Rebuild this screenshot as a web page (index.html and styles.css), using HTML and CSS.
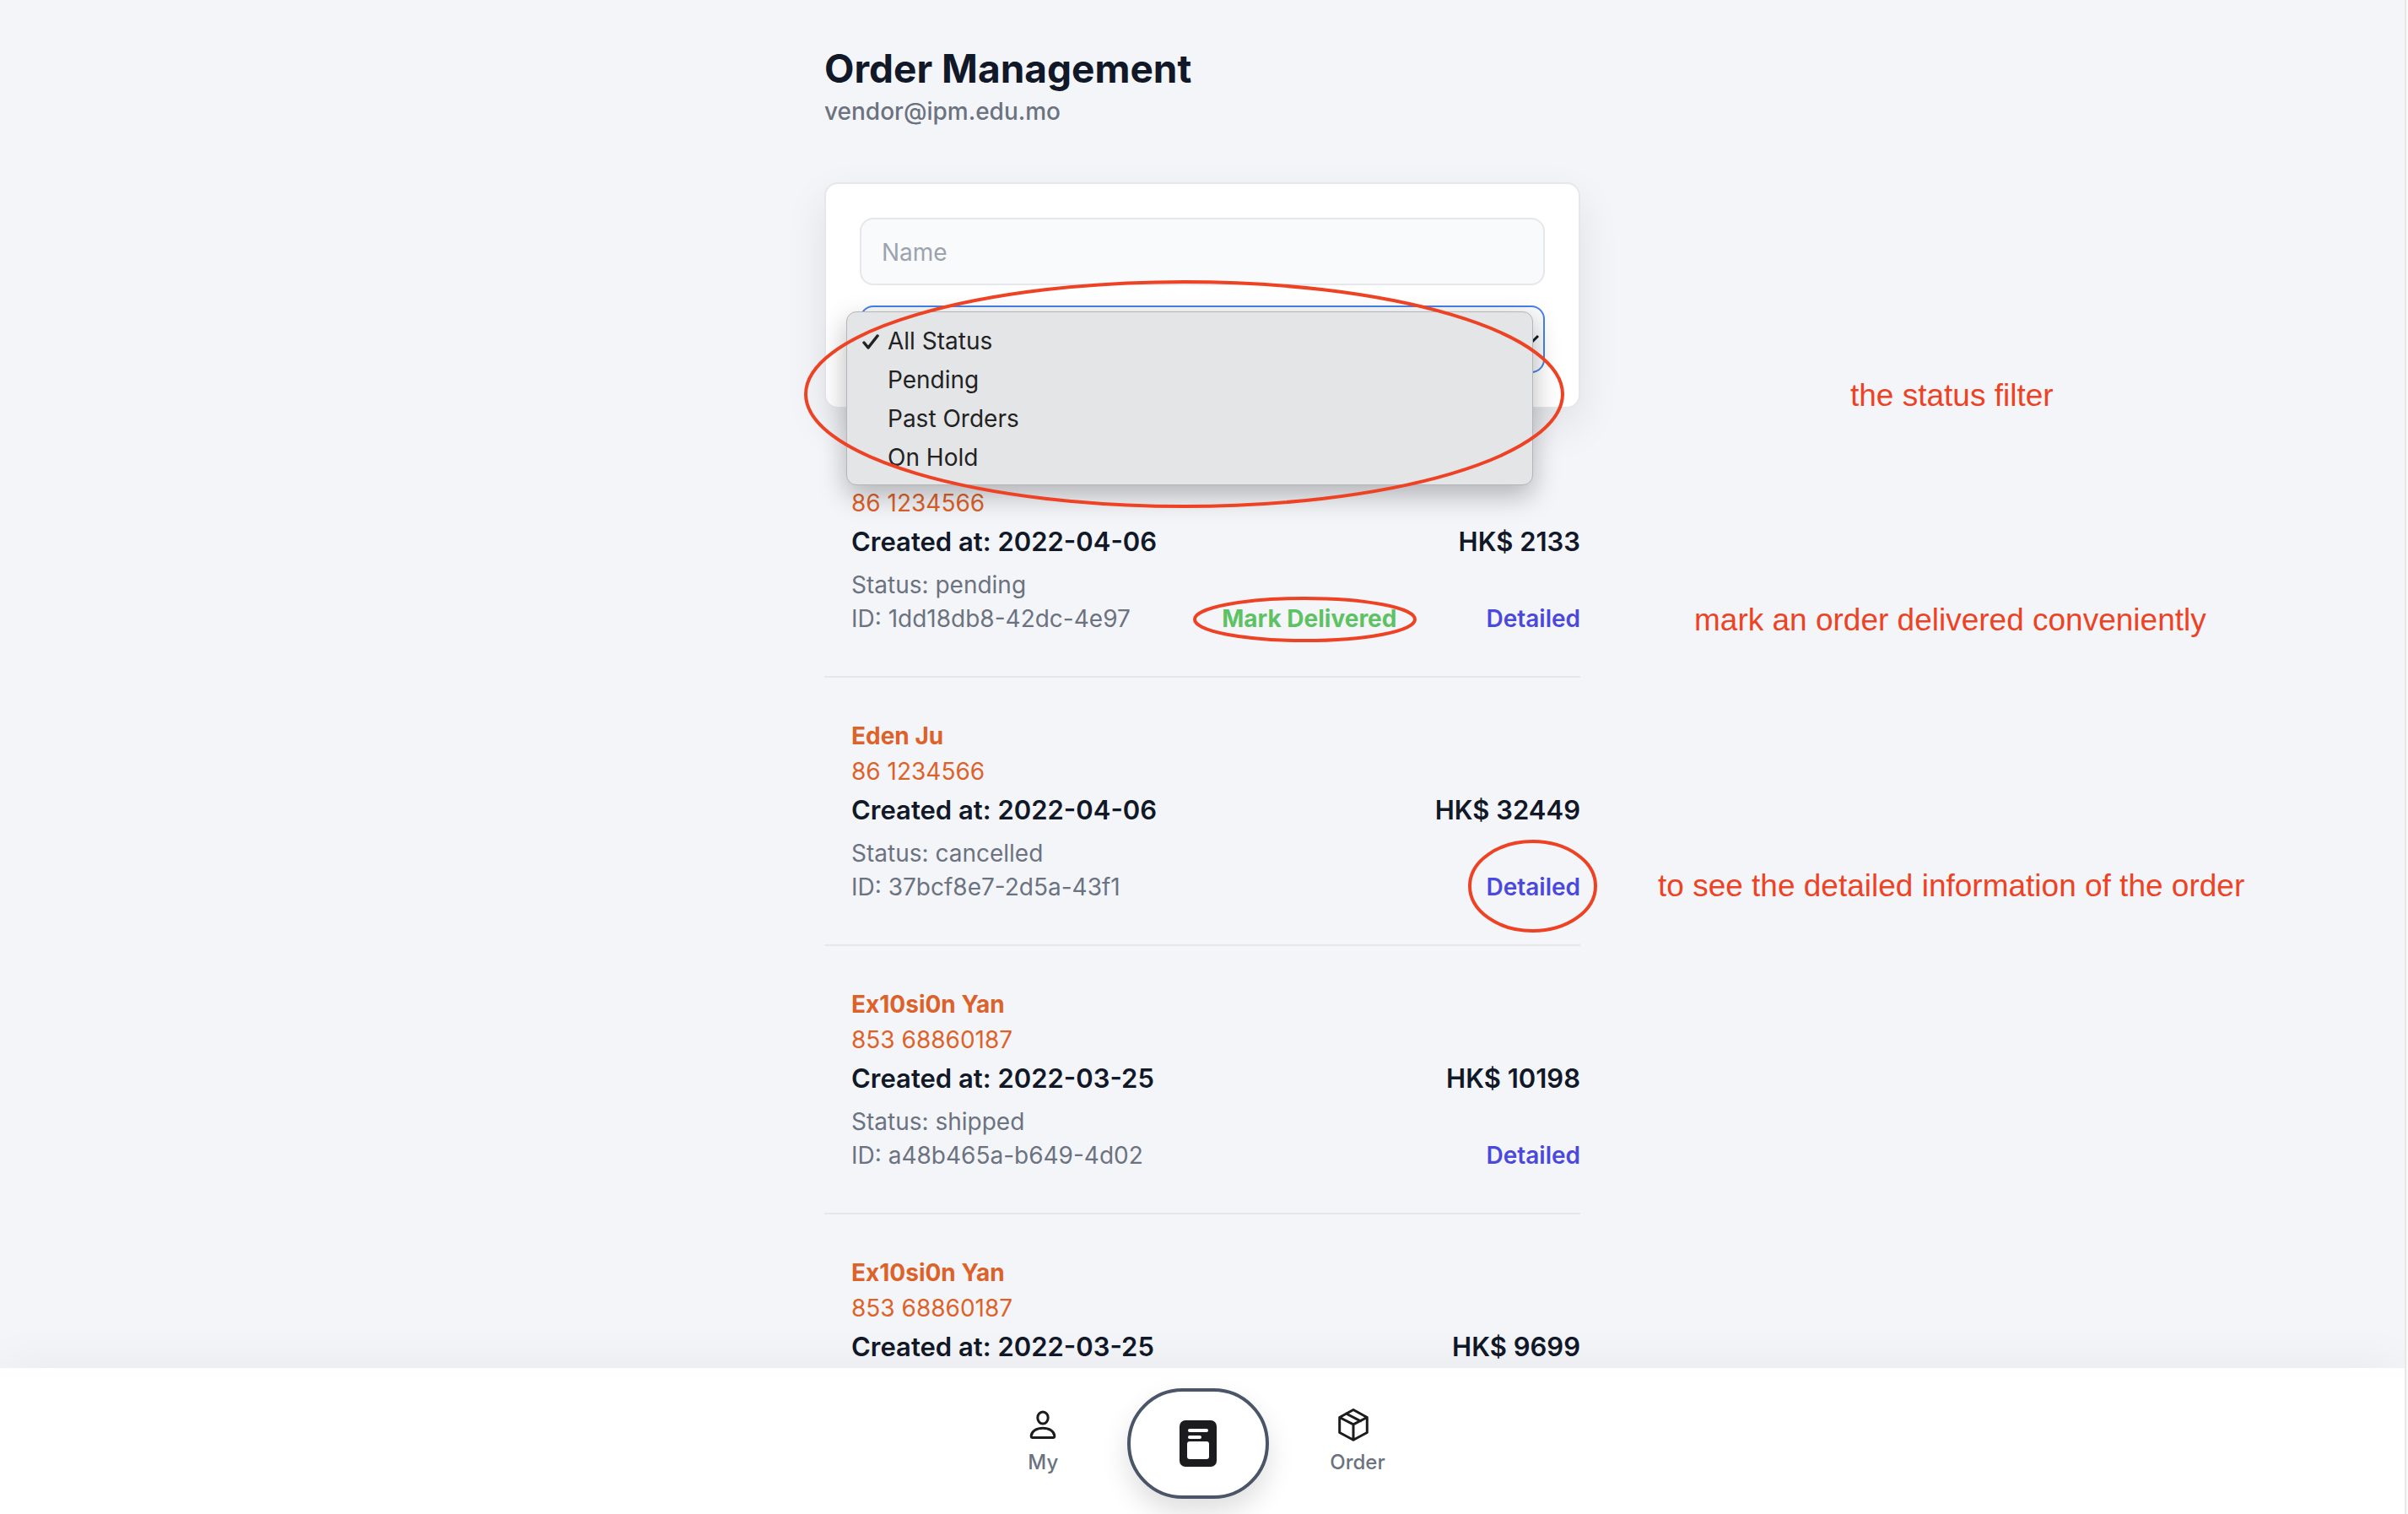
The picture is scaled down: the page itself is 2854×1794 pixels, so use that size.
FILE: index.html
```html
<!DOCTYPE html>
<html lang="en">
<head>
<meta charset="utf-8">
<meta name="viewport" content="width=device-width, initial-scale=1">
<title>Order Management</title>
<link rel="stylesheet" href="styles.css">
</head>
<body>
<div class="page">
  <main class="content">
    <header class="header">
      <h1 class="title">Order Management</h1>
      <p class="email">vendor@ipm.edu.mo</p>
    </header>

    <form class="filters">
      <input class="field" type="text" placeholder="Name" aria-label="Name">
      <div class="select-wrap">
        <select class="field field-open" aria-label="Status">
          <option>All Status</option>
          <option>Pending</option>
          <option>Past Orders</option>
          <option>On Hold</option>
        </select>
        <svg class="chevron" viewBox="0 0 20 20" aria-hidden="true"><path d="M6 8l4 4 4-4"/></svg>
        <ul class="menu">
          <li class="menu-item"><svg class="tick" viewBox="0 0 20 20" aria-hidden="true"><path d="M2 11l5 6L18 3"/></svg>All Status</li>
          <li class="menu-item">Pending</li>
          <li class="menu-item">Past Orders</li>
          <li class="menu-item">On Hold</li>
        </ul>
        <svg class="ring ring-filter" viewBox="0 0 901 270" aria-hidden="true"><ellipse cx="450.5" cy="135" rx="448.5" ry="133"/></svg>
        <p class="note note-filter">the status filter</p>
      </div>
    </form>

    <ul class="orders">
      <li class="order">
        <p class="name">Eden Ju</p>
        <p class="phone">86 1234566</p>
        <div class="line line-main"><span>Created at: 2022-04-06</span><span>HK$ 2133</span></div>
        <p class="meta">Status: pending</p>
        <div class="line meta"><span>ID: 1dd18db8-42dc-4e97</span>
          <div class="actions">
            <div class="marked"><button class="deliver" type="button">Mark Delivered</button>
              <svg class="ring ring-deliver" viewBox="0 0 265 54" aria-hidden="true"><ellipse cx="132.5" cy="27" rx="130.5" ry="25"/></svg></div>
            <a class="detail" href="#">Detailed</a>
          </div>
          <p class="note note-deliver">mark an order delivered conveniently</p>
        </div>
      </li>
      <li class="order">
        <p class="name">Eden Ju</p>
        <p class="phone">86 1234566</p>
        <div class="line line-main"><span>Created at: 2022-04-06</span><span>HK$ 32449</span></div>
        <p class="meta">Status: cancelled</p>
        <div class="line meta"><span>ID: 37bcf8e7-2d5a-43f1</span>
          <div class="marked"><a class="detail" href="#">Detailed</a>
            <svg class="ring ring-detail" viewBox="0 0 153 110" aria-hidden="true"><ellipse cx="76.5" cy="55" rx="74.5" ry="53"/></svg></div>
          <p class="note note-detail">to see the detailed information of the order</p>
        </div>
      </li>
      <li class="order">
        <p class="name">Ex10si0n Yan</p>
        <p class="phone">853 68860187</p>
        <div class="line line-main"><span>Created at: 2022-03-25</span><span>HK$ 10198</span></div>
        <p class="meta">Status: shipped</p>
        <div class="line meta"><span>ID: a48b465a-b649-4d02</span><a class="detail" href="#">Detailed</a></div>
      </li>
      <li class="order">
        <p class="name">Ex10si0n Yan</p>
        <p class="phone">853 68860187</p>
        <div class="line line-main"><span>Created at: 2022-03-25</span><span>HK$ 9699</span></div>
      </li>
    </ul>
  </main>

  <nav class="tabs">
    <a class="tab" href="#">
      <svg class="tab-icon" viewBox="0 0 40 40" aria-hidden="true"><ellipse cx="20" cy="11" rx="6.200" ry="7"/><path d="M6.200 32.500C6.500 27 12.500 23.200 20 23.200S33.500 27 33.800 32.500C33.800 34 33.300 34.500 32 34.500H8C6.700 34.500 6.200 34 6.200 32.500z"/></svg>
      <span>My</span>
    </a>
    <button class="tab-main" type="button" aria-label="Orders">
      <svg class="doc" viewBox="0 0 44 55" aria-hidden="true"><rect class="ink" width="44" height="55" rx="7"/><rect x="10" y="10" width="24" height="4" rx="2"/><rect x="10" y="18" width="16" height="4" rx="2"/><rect x="9" y="25" width="26" height="21" rx="3"/></svg>
    </button>
    <a class="tab" href="#">
      <svg class="tab-icon" viewBox="5 0 40 40" aria-hidden="true"><path d="M20 1.500L36.300 10.500V28.500L20 37.200L3.700 28.500V10.500zM3.700 10.500L20 18.800L36.300 10.500M20 18.800V37.200M11.500 6L28.500 14.800"/></svg>
      <span>Order</span>
    </a>
  </nav>
</div>
</body>
</html>
```
FILE: styles.css
```css
* { box-sizing: border-box; }
html { background: #fafafa; }
body { margin: 0; padding-right: 2px; }
h1, p, ul { margin: 0; padding: 0; }
ul { list-style: none; }

.page {
  height: 100vh;
  display: flex;
  flex-direction: column;
  overflow: hidden;
  background: #f4f5f9;
  border-right: 2px solid #e8e8e8;
  font: 28px/40px Inter, "Liberation Sans", sans-serif;
  color: #111827;
}
.content {
  flex: 1;
  min-height: 0;
  width: 100%;
  max-width: 896px;
  margin: 0 auto;
}

.header { padding: 50px 0 64px; }
.title { font-size: 46px; line-height: 62px; font-weight: 700; }
.email { font-weight: 500; color: #6b7280; }

.filters {
  display: grid;
  gap: 24px;
  padding: 40px;
  background: #fff;
  border: 2px solid #e5e7eb;
  border-radius: 16px;
  box-shadow: 0 20px 50px rgba(0, 0, 0, .09);
}
.field {
  display: block;
  width: 100%;
  height: 80px;
  padding: 2px 24px 0;
  appearance: none;
  background: #f9fafb;
  border: 2px solid #e5e7eb;
  border-radius: 16px;
  font: inherit;
  color: #111827;
}
.field::placeholder { color: #9ca3af; opacity: 1; }
.field-open { border-color: #4680e8; }
.select-wrap, .marked { position: relative; }
.chevron {
  position: absolute;
  right: -4px;
  top: 20px;
  width: 40px;
  height: 40px;
  fill: none;
  stroke: #111827;
  stroke-width: 1.5;
}
.menu {
  position: absolute;
  left: -16px;
  right: 14px;
  top: 7px;
  z-index: 1;
  padding: 11px 0 9px;
  background: #e4e5e7;
  border: 1px solid #b4b5b7;
  border-radius: 12px;
  box-shadow: 0 12px 32px rgba(0, 0, 0, .28);
  color: #222;
}
.menu-item { position: relative; padding-left: 48px; line-height: 46px; }
.tick {
  position: absolute;
  left: 18px;
  top: 14px;
  width: 20px;
  height: 20px;
  fill: none;
  stroke: #222;
  stroke-width: 3.5;
  stroke-linecap: round;
  stroke-linejoin: round;
}

.orders { padding-top: 1px; }
.order {
  padding: 49px 0 48px 32px;
  border-bottom: 2px solid #e5e7eb;
}
.name { font-weight: 700; color: #dd6229; margin-bottom: 2px; }
.phone { color: #dd6229; }
.line { position: relative; display: flex; justify-content: space-between; }
.line-main { font-size: 31px; line-height: 52px; font-weight: 600; margin-bottom: 5px; }
.meta { color: #6b7280; }
.actions { display: flex; gap: 106px; }
.deliver {
  padding: 0;
  border: 0;
  background: none;
  font: inherit;
  font-weight: 700;
  color: #5dc264;
}
.detail { font-weight: 600; color: #4b48dd; text-decoration: none; }

.ring {
  position: absolute;
  z-index: 2;
  fill: none;
  stroke: #ee4225;
  stroke-width: 4;
  pointer-events: none;
}
.ring-filter { left: -66px; top: -30px; width: 901px; height: 270px; }
.ring-deliver { left: -34px; top: -6px; width: 265px; height: 54px; }
.ring-detail { right: -20px; top: -36px; width: 153px; height: 110px; }
.note {
  position: absolute;
  font: 37px/44px "Liberation Sans", Arial, sans-serif;
  color: #ee4225;
  white-space: nowrap;
}
.note-filter { left: 1174px; top: 85px; }
.note-deliver { left: 999px; top: 0; }
.note-detail { left: 956px; top: -3px; }

.tabs {
  position: relative;
  z-index: 3;
  display: flex;
  justify-content: center;
  align-items: flex-start;
  padding: 24px 0 18px 8px;
  background: #fff;
  box-shadow: 0 0 60px rgba(0, 0, 0, .06);
}
.tab {
  display: flex;
  flex-direction: column;
  align-items: center;
  gap: 8px;
  margin-top: 24px;
  font-size: 24px;
  line-height: 32px;
  font-weight: 500;
  color: #6b7280;
  text-decoration: none;
}
.tab-icon {
  width: 40px;
  height: 40px;
  overflow: visible;
  fill: none;
  stroke: #1c1c1e;
  stroke-width: 3;
  stroke-linecap: round;
  stroke-linejoin: round;
}
.tab-main {
  display: grid;
  place-items: center;
  width: 168px;
  height: 131px;
  margin: 0 72px 0 80px;
  padding: 0;
  background: #fff;
  border: 4px solid #4a5568;
  border-radius: 66px;
  box-shadow: 0 16px 32px rgba(0, 0, 0, .13);
}
.doc { width: 44px; height: 55px; fill: #fff; }
.ink { fill: #1c1c1e; }
```
